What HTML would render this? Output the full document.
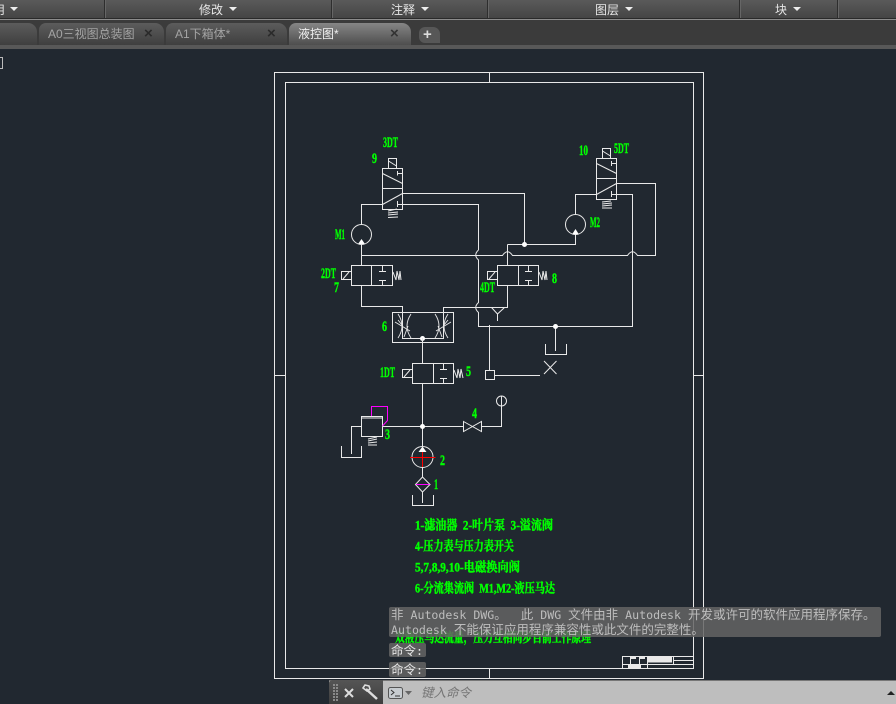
<!DOCTYPE html>
<html><head><meta charset="utf-8"><style>
html,body{margin:0;padding:0;background:#212830}
#p{position:relative;width:896px;height:704px;overflow:hidden;background:#212830;font-family:"Liberation Sans","Noto Sans CJK SC",sans-serif}
.a{position:absolute;white-space:nowrap}
.rib{left:0;top:0;width:896px;height:18px;background:linear-gradient(#5a5a5a,#454545)}
.sep{top:0;width:1px;height:18px;background:#2e2e2e;box-shadow:1px 0 0 #666}
.pt{color:#e6e6e6;font-size:12px;top:2px;line-height:17px}
.ar{width:0;height:0;border-left:4px solid transparent;border-right:4px solid transparent;border-top:4px solid #eee;top:7px}
.tab{top:23px;height:22px;border-radius:7px 9px 0 0;background:linear-gradient(#5c5c5c,#3f3f3f);box-sizing:border-box}
.tt{top:26px;font-size:12px;line-height:16px;color:#a4a4a4}
.x{top:25px;font-size:15px;line-height:17px;color:#2a2a2a;font-weight:bold}
.ov{background:rgba(100,100,100,.85);border-radius:2px}
.m{font-family:"DejaVu Sans Mono","Noto Sans CJK SC",monospace;font-size:11.6px;color:#bdbdbd;line-height:15px}
.m b{font-family:"Noto Sans CJK SC",sans-serif;font-weight:normal;font-size:12.5px}
svg text{white-space:pre}
</style></head><body><div id="p">
<div class="a rib"></div>
<div class="a" style="left:0;top:18px;width:896px;height:1px;background:#2a2a2a"></div>
<div class="a" style="left:0;top:19px;width:896px;height:1px;background:#8c8c8c"></div>
<div class="a" style="left:0;top:20px;width:896px;height:25px;background:#3b3b3b"></div>
<div class="a" style="left:0;top:45px;width:896px;height:4px;background:#585858"></div>
<div class="a sep" style="left:104px"></div><div class="a sep" style="left:331px"></div><div class="a sep" style="left:487px"></div><div class="a sep" style="left:739px"></div><div class="a sep" style="left:837px"></div>
<div class="a pt" style="left:-7px">用</div><div class="a ar" style="left:10px"></div>
<div class="a pt" style="left:199px">修改</div><div class="a ar" style="left:229px"></div>
<div class="a pt" style="left:391px">注释</div><div class="a ar" style="left:421px"></div>
<div class="a pt" style="left:595px">图层</div><div class="a ar" style="left:625px"></div>
<div class="a pt" style="left:775px">块</div><div class="a ar" style="left:793px"></div>
<div class="a tab" style="left:-20px;width:57px"></div>
<div class="a tab" style="left:39px;width:125px"></div>
<div class="a tab" style="left:166px;width:121px"></div>
<div class="a tab" style="left:289px;width:122px;background:linear-gradient(#868686,#4e4e4e)"></div>
<div class="a" style="left:419px;top:27px;width:21px;height:16px;border-radius:6px 7px 0 6px;background:#575757"></div>
<div class="a" style="left:423px;top:26px;color:#ddd;font-size:15px;line-height:17px;font-weight:bold">+</div>
<div class="a tt" style="left:48px">A0三视图总装图</div><div class="a x" style="left:144px">×</div>
<div class="a tt" style="left:175px">A1下箱体*</div><div class="a x" style="left:267px">×</div>
<div class="a tt" style="left:298px;color:#efefef">液控图*</div><div class="a x" style="left:390px;color:#333">×</div>
<div class="a" style="left:-5px;top:57px;width:6px;height:10px;border:1px solid #bbb"></div>

<svg class="a" style="left:0;top:0" width="896" height="704" fill="none" stroke="#e9e9e9" stroke-width="1">
<path d="M274.500 72.500H703.500V678.500H274.500ZM285.500 82.500H693.500V668.500H285.500ZM275 375.500H285M693 375.500H703M489.500 72V82M489.500 668V678"/>
<path d="M622.500 656.500H693.500V668.500H622.500ZM647.500 656V668M673.500 656V664M648 664.500H693M673 660.500H693M622 664.500H647M630.500 656V664M639.500 656V664"/>
<path fill="#e9e9e9" stroke="none" d="M648 657H672V662.500H648ZM628 665H641V668H628ZM631 657H636V659H631ZM640 657H645V659H640Z"/>

<!-- valve 9 -->
<path d="M388.500 158.500H396.500V168.500H388.500ZM388.500 161L396.500 166M382.500 168.500H402.500V209.500H382.500ZM382.500 188.500H402.500M382.500 173.500L402.500 183.500M397.500 171V175.500M397.500 173.500H402.500M382.500 204.500L402.500 193.500M397.500 201V207M397.500 204.500H402.500"/>
<path d="M388 211L397 209M388 213L398 212M388 215L398 214M388 217.500L398 217"/>
<!-- valve 10 -->
<path d="M602.500 148.500H610.500V158.500H602.500ZM602.500 151L610.500 156M596.500 158.500H616.500V199.500H596.500ZM596.500 178.500H616.500M596.500 163.500L616.500 173.500M611.500 161V166M611.500 163.500H616.500M596.500 194.500L616.500 183.500M611.500 191V197M611.500 194.500H616.500"/>
<path d="M602 202L611 201M602 204L612 203M602 206L612 205M602 208L612 208"/>
<!-- pipes -->
<path d="M402.500 193.500H524.500V244.500H575.500V234M382.500 204.500H361.500V224.500M402.500 204.500H478.500V250M478.500 250Q473 255 478.500 260V302.500Q473 307.500 478.500 312.500V326.500H632.500V194.500H616.500M361.500 244.500V265M361.500 255.500H502.500Q507.500 248 512.500 255.500H627.500Q632.500 248 637.500 255.500H655.500V183.500H616.500M596.500 194.500H575.500V214.500M507.500 244.500H524.500M507.500 244.500V265"/>
<circle cx="361.500" cy="234.500" r="10"/><circle cx="575.500" cy="224.500" r="10"/>
<path fill="#fff" stroke="none" d="M361.500 239L365 244H358ZM575.500 229L579 234.500H572Z"/>
<circle cx="524.500" cy="244.500" r="2.500" fill="#fff" stroke="none"/>
<!-- valve 7 -->
<path d="M351.500 265.500H392.500V285.500H351.500ZM371.500 265V286M341.500 271.500H351.500V279.500H341.500ZM343 279L349 272M382.500 265V271M379 271.500H386M382.500 280V285M379 280.500H386M393 272L396 280L397 271L399 280L400 271L401 280"/>
<!-- valve 8 -->
<path d="M497.500 265.500H538.500V285.500H497.500ZM518.500 265V286M487.500 271.500H497.500V279.500H487.500ZM489 279L495 272M528.500 265V271M525 271.500H532M528.500 280V285M525 280.500H532M539 272L542 280L543 271L545 280L546 271L547 280"/>
<!-- lower pipes -->
<path d="M361.500 286V306.500H402.500V338.500H443.500V307.500H507.500V285.500M491.500 307.500L497.500 314L504.500 307.500M497.500 314V321M489.500 325V370M485.500 370.500H494.500V379.500H485.500ZM494.500 375.500H540M544 361L556.500 374M556.500 361L544 374M555.500 326V351M545.500 344V354.500H566.500V344"/>
<circle cx="555.500" cy="326.500" r="2.500" fill="#fff" stroke="none"/>
<!-- valve 6 -->
<path d="M392.500 312.500H453.500V342.500H392.500Z"/>
<path stroke-width=".9" d="M398 314Q406 326 398 338M411 314Q403 326 411 338M395 322L410 331M408 326L404 337M448 314Q440 326 448 338M435 314Q443 326 435 338M451 322L436 331M438 326L442 337M398 320L402 325M448 320L444 325"/>
<circle cx="422.500" cy="338.500" r="2.500" fill="#fff" stroke="none"/>
<path d="M422.500 338V363M422.500 384V446"/>
<!-- valve 5 -->
<path d="M412.500 363.500H453.500V383.500H412.500ZM433.500 363V384M402.500 369.500H412.500V377.500H402.500ZM404 377L410 370M443.500 363V369M440 369.500H447M443.500 378V383M440 378.500H447M454 370L457 378L458 369L460 378L461 369L463 378"/>
<!-- lower -->
<path d="M361.500 416.500H382.500V436.500H361.500ZM361.500 418H382.500M382.500 426.500H463.500M361.500 426.500H351.500V454M341.500 446V457.500H361.500V446M463.500 421.500L481.500 431.500V421.500L463.500 431.500ZM481.500 426.500H501.500V406"/>
<circle cx="501.500" cy="401" r="5"/><path d="M501.500 396V406"/>
<path d="M368 439L377 437M368 441L377 439M368 443L377 442M368 445L377 445"/>
<circle cx="422.500" cy="426.500" r="2.500" fill="#fff" stroke="none"/>
<circle cx="422.500" cy="457" r="10.500"/>
<path fill="#fff" stroke="none" d="M422.500 446.500L426.500 452H418.500Z"/>
<path d="M422.500 467V477M415.500 484.500L422.500 477L430 484.500L422.500 492ZM422.500 492V503M412.500 495V505.500H433.500V495"/>
<path stroke="#f00" d="M410 457.500H435.500M422.500 452V467"/>
<path stroke="#f0f" d="M371.500 416V406.500H387.500V420.500L382.500 426M416 484.500H429.500"/>

<g fill="#0f0" stroke="#0f0" stroke-width=".4" font-family="'Liberation Serif','Noto Serif CJK SC',serif" font-size="15" font-weight="bold">
<text x="383" y="147" textLength="15" lengthAdjust="spacingAndGlyphs">3DT</text>
<text x="372" y="163" textLength="5" lengthAdjust="spacingAndGlyphs">9</text>
<text x="335" y="239" textLength="10" lengthAdjust="spacingAndGlyphs">M1</text>
<text x="321" y="278" textLength="15" lengthAdjust="spacingAndGlyphs">2DT</text>
<text x="334" y="292" textLength="5" lengthAdjust="spacingAndGlyphs">7</text>
<text x="480" y="292" textLength="15" lengthAdjust="spacingAndGlyphs">4DT</text>
<text x="579" y="155" textLength="9" lengthAdjust="spacingAndGlyphs">10</text>
<text x="614" y="153" textLength="15" lengthAdjust="spacingAndGlyphs">5DT</text>
<text x="590" y="227" textLength="10" lengthAdjust="spacingAndGlyphs">M2</text>
<text x="552" y="283" textLength="5" lengthAdjust="spacingAndGlyphs">8</text>
<text x="382" y="331" textLength="5" lengthAdjust="spacingAndGlyphs">6</text>
<text x="380" y="377" textLength="15" lengthAdjust="spacingAndGlyphs">1DT</text>
<text x="466" y="376" textLength="5" lengthAdjust="spacingAndGlyphs">5</text>
<text x="472" y="418" textLength="5" lengthAdjust="spacingAndGlyphs">4</text>
<text x="385" y="439" textLength="5" lengthAdjust="spacingAndGlyphs">3</text>
<text x="440" y="465" textLength="5" lengthAdjust="spacingAndGlyphs">2</text>
<text x="434" y="489" textLength="4" lengthAdjust="spacingAndGlyphs">1</text>
</g>
<g fill="#0f0" stroke="#0f0" stroke-width=".45" font-family="'Liberation Serif','Noto Serif CJK SC',serif" font-size="13" font-weight="bold">
<text x="415" y="529.500" textLength="138" lengthAdjust="spacingAndGlyphs">1-滤油器  2-叶片泵  3-溢流阀</text>
<text x="415" y="550.500" textLength="99" lengthAdjust="spacingAndGlyphs">4-压力表与压力表开关</text>
<text x="415" y="571.500" textLength="105" lengthAdjust="spacingAndGlyphs">5,7,8,9,10-电磁换向阀</text>
<text x="415" y="592.500" textLength="140" lengthAdjust="spacingAndGlyphs">6-分流集流阀  M1,M2-液压马达</text>
<text x="395" y="642" textLength="196" lengthAdjust="spacingAndGlyphs">双液压马达流量，压力互相同步目前工作原理</text>
</g>
</svg>

<div class="a ov" style="left:389px;top:607px;width:492px;height:30px"></div>
<div class="a m" style="left:391px;top:606px;white-space:pre"><b>非</b> Autodesk DWG<b>。</b>  <b>此</b> DWG <b>文件由非</b> Autodesk <b>开发或许可的软件应用程序保存。</b></div>
<div class="a m" style="left:391px;top:621px;white-space:pre">Autodesk <b>不能保证应用程序兼容性或此文件的完整性。</b></div>
<div class="a ov" style="left:389px;top:643px;width:37px;height:14px"></div>
<div class="a ov" style="left:389px;top:662px;width:37px;height:15px"></div>
<div class="a m" style="left:391px;top:642px;color:#e4e4e4"><b>命令</b>:</div>
<div class="a m" style="left:391px;top:661px;color:#e4e4e4"><b>命令</b>:</div>

<div class="a" style="left:329px;top:680px;width:567px;height:24px;background:#bebebe;border-top:1px solid #777;box-sizing:border-box"></div>
<div class="a" style="left:329px;top:680px;width:54px;height:24px;background:linear-gradient(#555,#3e3e3e);border-radius:3px 0 0 0"></div>
<svg class="a" style="left:329px;top:680px" width="120" height="24" fill="none">
<path stroke="#8a8a8a" stroke-width="2" stroke-dasharray="2 1" d="M5 4V22M8 4V22"/>
<path stroke="#ddd" stroke-width="2" d="M16 9L24 17M24 9L16 17"/>
<path stroke="#ddd" stroke-width="2.500" d="M37 9L48 19"/><path stroke="#ddd" stroke-width="1.600" d="M40 6L36 5L34 8L38 11L41 9Z"/>
<rect x="59.500" y="7.500" width="14" height="11" rx="2" fill="#c7ccd0" stroke="#555"/>
<path stroke="#333" d="M62 10L65 12.500L62 15M66 16H71"/>
<path fill="#666" d="M76 11H83L79.500 15Z"/>
</svg>
<div class="a" style="left:421px;top:685px;font-size:12.5px;line-height:16px;font-style:italic;color:#757575">键入命令</div>
<div class="a" style="left:887px;top:691px;width:0;height:0;border-left:4px solid transparent;border-right:4px solid transparent;border-bottom:4px solid #222"></div>
</div></body></html>
